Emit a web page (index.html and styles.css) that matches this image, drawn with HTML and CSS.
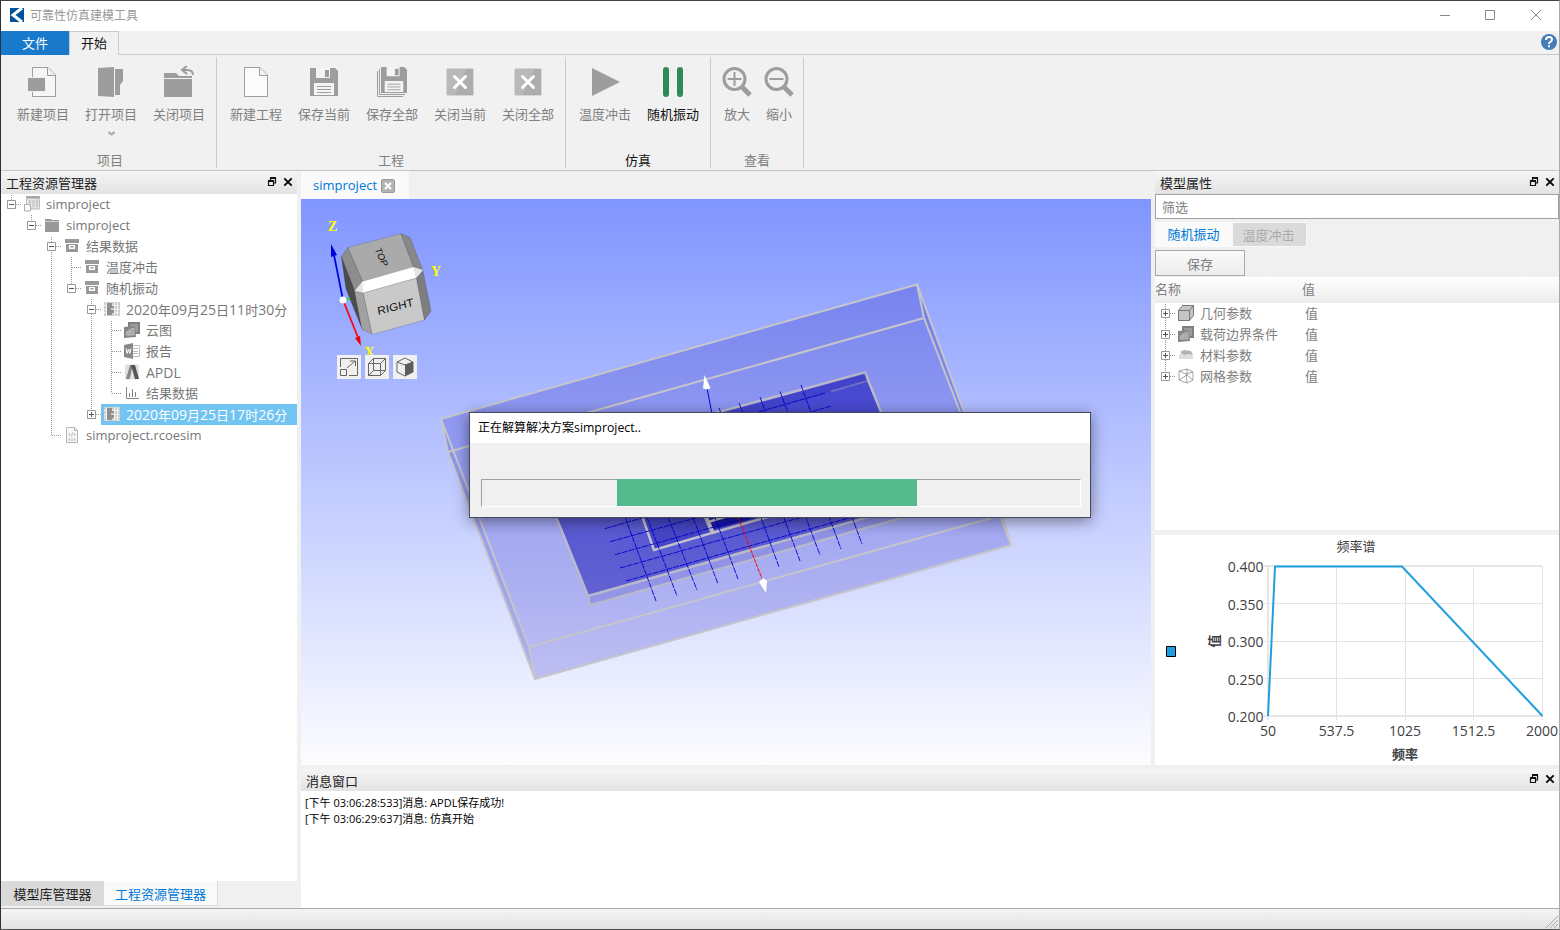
FILE: index.html
```html
<!DOCTYPE html>
<html lang="zh-CN">
<head>
<meta charset="utf-8">
<title>可靠性仿真建模工具</title>
<link rel="stylesheet" href="styles.css">
</head>
<body>
<svg class="defs" width="0" height="0">
  <defs>
    <symbol id="box" viewBox="0 0 16 16"><path fill="#999" d="M1 1h14v4H1zM2 6h12v8H2z"/><path fill="#fff" d="M5 7h6v4H5z"/><path fill="#999" d="M6.500 8h3v1.500h-3z"/></symbol>
    <symbol id="sheet" viewBox="0 0 16 16"><path fill="#cfcfcf" d="M0 1h16v14H0z"/><path fill="#8f8f8f" d="M3 2h5v3h2v2H7v2h3v3H8v2H3z"/><path stroke="#f2f2f2" fill="none" d="M2.500 1v14M10.500 1v14M0 4.500h2M0 8.500h2M0 11.500h2M8 4.500h7M10 8.500h5M10 11.500h5M13.500 1v14"/></symbol>
    <symbol id="cloud" viewBox="0 0 16 16"><path fill="#808080" d="M4 0h12v12H4z"/><path fill="#9c9c9c" d="M6 2h8v8H6z"/><path fill="#858585" d="M0 5l11-1 1 11-12 1z"/><path stroke="#b9b9b9" fill="#a5a5a5" d="M2 13q0-4 4-4 0-3 4-3v7zM5 7v7M2 10h8"/></symbol>
    <symbol id="float" viewBox="0 0 10 10"><path d="M3 1h6M3.500 1v2M8.500 1v5H6M1 4h5.500v4.500h-5V4" fill="none" stroke="#111" stroke-width="1.200"/><path d="M3 0h6v2H3zM1 3h6v2H1z" fill="#111"/></symbol>
    <symbol id="close" viewBox="0 0 10 10"><path d="M1.300 1.300l7.400 7.400M8.700 1.300L1.300 8.700" stroke="#000" stroke-width="1.800"/></symbol>
    <symbol id="floppy" viewBox="0 0 28 28"><path fill="#9d9d9d" d="M0 0h25l3 3v25H0z"/><path fill="#f4f4f4" d="M6 0h14v10H6zM4 15h20v12H4z"/><path fill="#9d9d9d" d="M15 2h4v7h-4z"/><path stroke="#9d9d9d" d="M7 18.500h14M7 21.500h14M7 24.500h14"/></symbol>
    <symbol id="xbox" viewBox="0 0 28 28"><rect x=".5" y=".5" width="27" height="27" rx="1.500" fill="#b9b9b9" stroke="#d6d6d6"/><path fill="#adadad" d="M20 1h7v26H9z"/><path d="M8.500 8.500l11 11M19.500 8.500l-11 11" stroke="#fff" stroke-width="3" stroke-linecap="round"/></symbol>
  </defs>
</svg>
<div class="window">
  <header class="titlebar">
    <svg class="logo" viewBox="0 0 14 14"><path fill="#00529b" d="M0 0h14v14H0z"/><path d="M12 0L3 7l9 7" fill="none" stroke="#fff" stroke-width="3"/></svg>
    <span class="app-name">可靠性仿真建模工具</span>
    <svg class="win-buttons" viewBox="0 0 106 14"><path d="M0 7.500h10M45.500 2.500h9v9h-9zM91 2l10 10M101 2L91 12" fill="none" stroke="#8a8a8a"/></svg>
  </header>
  <nav class="menu-tabs">
    <span class="file-tab">文件</span><span class="start-tab">开始</span>
    <svg class="help" viewBox="0 0 16 16"><circle cx="8" cy="8" r="8" fill="#427db8"/><path d="M5 6q0-3 3-3t3 2.600q0 1.400-1.600 2.200Q8 8.500 8 10" fill="none" stroke="#fff" stroke-width="2"/><path fill="#fff" d="M7 11.200h2v2H7z"/></svg>
  </nav>
  <section class="ribbon">
    <div class="group">
      <div class="tools">
        <div class="tool"><svg viewBox="0 0 32 32"><path d="M5.500 11V1.500H21L28.500 9v21.500h-23V26" fill="#f6f6f6" stroke="#9d9d9d"/><path d="M20.500 1.500V9.500h8" fill="#f1f1f1" stroke="#9d9d9d"/><path fill="#f1f1f1" d="M0 11h19v15H0z"/><path fill="#9d9d9d" d="M1 12h17v13H1z"/></svg>新建项目</div>
        <div class="tool"><svg viewBox="0 0 32 32"><path fill="#9d9d9d" d="M3 2l16-1v30L3 30zM20 3h8v12l-3 4v10h-5z"/></svg>打开项目<svg class="drop" viewBox="0 0 7 5"><path d="M.5 1l3 2.500 3-2.500" fill="none" stroke="#a8a8a8" stroke-width="2"/></svg></div>
        <div class="tool"><svg viewBox="0 0 32 32"><path fill="#9d9d9d" d="M1 7h12l3 3h13v2H1zM1 13h28v18H1z"/><path d="M20 4h4q6 0 6 5" fill="none" stroke="#9d9d9d" stroke-width="2"/><path d="M24 0l-5 4 5 4" fill="none" stroke="#9d9d9d" stroke-width="2"/></svg>关闭项目</div>
      </div>
      <div class="caption">项目</div>
    </div>
    <div class="group">
      <div class="tools">
        <div class="tool"><svg viewBox="0 0 32 32"><path d="M4.500 1.500H20L27.500 9v21.500h-23z" fill="#fbfbfb" stroke="#9d9d9d"/><path d="M19.500 1.500V9.500h8" fill="#f1f1f1" stroke="#9d9d9d"/></svg>新建工程</div>
        <div class="tool"><svg viewBox="0 0 32 32"><use href="#floppy" x="2" y="2" width="28" height="28"/></svg>保存当前</div>
        <div class="tool"><svg viewBox="0 0 32 32"><use href="#floppy" x="5" y="1" width="26" height="26"/><path d="M3.500 3v25.500H29M1.500 5v25.500H27" fill="none" stroke="#9d9d9d"/></svg>保存全部</div>
        <div class="tool"><svg viewBox="0 0 32 32"><use href="#xbox" x="2" y="2" width="28" height="28"/></svg>关闭当前</div>
        <div class="tool"><svg viewBox="0 0 32 32"><use href="#xbox" x="2" y="2" width="28" height="28"/></svg>关闭全部</div>
      </div>
      <div class="caption">工程</div>
    </div>
    <div class="group">
      <div class="tools">
        <div class="tool"><svg viewBox="0 0 32 32"><path fill="#9d9d9d" d="M3 2l28 14L3 30z"/></svg>温度冲击</div>
        <div class="tool active"><svg viewBox="0 0 32 32"><path d="M9 4v24M23 4v24" stroke="#2e8b57" stroke-width="6" stroke-linecap="round"/></svg>随机振动</div>
      </div>
      <div class="caption active">仿真</div>
    </div>
    <div class="group">
      <div class="tools narrow">
        <div class="tool"><svg viewBox="0 0 32 32"><circle cx="13.500" cy="13" r="10.500" fill="none" stroke="#9d9d9d" stroke-width="3"/><path d="M6.500 13h14M13.500 6v14" stroke="#9d9d9d" stroke-width="2"/><path d="M21 21l8 8" stroke="#9d9d9d" stroke-width="5"/></svg>放大</div>
        <div class="tool"><svg viewBox="0 0 32 32"><circle cx="13.500" cy="13" r="10.500" fill="none" stroke="#9d9d9d" stroke-width="3"/><path d="M6.500 13h14" stroke="#9d9d9d" stroke-width="2"/><path d="M21 21l8 8" stroke="#9d9d9d" stroke-width="5"/></svg>缩小</div>
      </div>
      <div class="caption">查看</div>
    </div>
  </section>

  <main class="workspace">
    <aside class="explorer">
      <div class="dock-title">工程资源管理器<svg><use href="#float"/></svg><svg><use href="#close"/></svg></div>
      <div class="tree">
        <svg class="guides" viewBox="1 194 296 260">
          <path class="dots" d="M11.500 195v6M16 204.500h6M31.500 215v6M36 225.500h6M51.500 237v5M56 246.500h6M51.500 252v183.500h10M71.500 257v27M72 267.500h9M76 288.500h6M91.500 299v6M96 309.500h5M91.500 314v96M111.500 321v72.500M112 330.500h10M112 351.500h10M112 372.500h10M112 393.500h10M96 414.500h5"/>
          <path class="expander" d="M7.500 200.500h8v8h-8zM27.500 221.500h8v8h-8zM47.500 242.500h8v8h-8zM67.500 284.500h8v8h-8zM87.500 305.500h8v8h-8zM87.500 410.500h8v8h-8z"/>
          <path class="sign" d="M9 204.500h5M29 225.500h5M49 246.500h5M69 288.500h5M89 309.500h5M89 414.500h5M91.500 412v5"/>
        </svg>
        <ul class="rows">
          <li class="l0"><svg viewBox="0 0 16 16"><path fill="#a9a9a9" d="M2 0h14v2H2z"/><path fill="#e4e4e4" stroke="#bdbdbd" d="M2.500 2.500h13v10.500h-13z"/><path stroke="#c8c8c8" stroke-width="2" d="M6 4v7M9.500 4v7M13 4v7"/><path fill="#fff" stroke="#aaa" d="M.5 8.500h4l2 2v4.500h-6z"/></svg><span>simproject</span></li>
          <li class="l1"><svg viewBox="0 0 16 16"><path fill="#999" d="M1 2h6l1 1h7v12H1z"/><path stroke="#ccc" d="M1 4.500h14"/></svg><span>simproject</span></li>
          <li class="l2"><svg><use href="#box"/></svg><span>结果数据</span></li>
          <li class="l3"><svg><use href="#box"/></svg><span>温度冲击</span></li>
          <li class="l3"><svg><use href="#box"/></svg><span>随机振动</span></li>
          <li class="l4"><svg><use href="#sheet"/></svg><span><i>2020</i>年<i>09</i>月<i>25</i>日<i>11</i>时<i>30</i>分</span></li>
          <li class="l5"><svg><use href="#cloud"/></svg><span>云图</span></li>
          <li class="l5"><svg viewBox="0 0 16 16"><path fill="#fff" stroke="#bbb" d="M8 2.500h7.500v11H8z"/><path stroke="#bbb" d="M9 5.500h5M9 8.500h5M9 10.500h5"/><path fill="#888" d="M0 2l9-2v16l-9-2z"/><path d="M2 5.500l1.200 5L4.500 6l1.300 4.500L7 5.500" fill="none" stroke="#fff"/></svg><span>报告</span></li>
          <li class="l5"><svg viewBox="0 0 16 16"><rect width="14" height="15" y=".5" x="1" rx="2" fill="#e0e0e0"/><path fill="#858585" d="M6 1h3L5.500 15H2z"/><path fill="#555" d="M7 1h4l4 14h-4z"/></svg><span><i>APDL</i></span></li>
          <li class="l5"><svg viewBox="0 0 16 16"><path d="M2.500 2v11.500H15M5.500 8v4M8.500 4v8M11.500 7v5" fill="none" stroke="#858585"/></svg><span>结果数据</span></li>
          <li class="l4 selected"><svg><use href="#sheet"/></svg><span><i>2020</i>年<i>09</i>月<i>25</i>日<i>17</i>时<i>26</i>分</span></li>
          <li class="l2"><svg viewBox="0 0 16 16"><path d="M2.500.5h8l3 3v12h-11zM10.500.5v3h3" fill="#f8f8f8" stroke="#b5b5b5"/><path d="M6 6L4.500 7.500 6 9M10 6l1.500 1.500L10 9M8.500 5.500l-1 4" fill="none" stroke="#999" stroke-width=".8"/><path fill="#ddd" d="M4 11h8v3H4z"/></svg><span>simproject.rcoesim</span></li>
        </ul>
      </div>
      <div class="bottom-tabs"><span class="tab-off">模型库管理器</span><span class="tab-on">工程资源管理器</span></div>
    </aside>

    <div class="right-side">
      <div class="upper">
        <section class="document">
          <div class="doc-tabs"><div class="doc-tab"><span>simproject</span><svg viewBox="0 0 14 14"><rect x=".5" y=".5" width="13" height="13" rx="1.500" fill="#b4b4b4" stroke="#999"/><path d="M4 4l6 6M10 4l-6 6" stroke="#fff" stroke-width="2"/></svg></div></div>
          <svg class="viewport" viewBox="301 199 850 566">
            <defs>
              <linearGradient id="sky" x2="0" y2="1"><stop stop-color="#8095ff"/><stop offset="1" stop-color="#fdfdff"/></linearGradient>
              <linearGradient id="slab" gradientUnits="userSpaceOnUse" x1="0" y1="284" x2="0" y2="680"><stop stop-color="#7784ef"/><stop offset="1" stop-color="#bdbef2"/></linearGradient>
              <linearGradient id="board" gradientUnits="userSpaceOnUse" x1="0" y1="371" x2="0" y2="600"><stop stop-color="#4546d0"/><stop offset="1" stop-color="#6262d2"/></linearGradient>
            </defs>
            <path fill="url(#sky)" d="M301 199h850v566H301z"/>
            <path fill="url(#slab)" d="M441 419L917 284.500 1002 515l9 30-476 134-87-227z"/>
            <path fill="#5555cc" opacity=".12" d="M441 419l7 33 87 227-6-32zM917 284.500l7 33.500 87 227-9-30z"/>
            <path fill="#8585df" opacity=".65" d="M588 596l2 9 315-88h-35z"/>
            <path fill="url(#board)" stroke="#b9b9cc" stroke-width="2.500" d="M865 372.500L534 462l54 134 330-93z"/>
            <path fill="#3838be" opacity=".3" d="M865 373l2 9-112 32h-34z"/>
            <path stroke="#6c6cc4" stroke-width="2" d="M867 381l-36 10.500"/>
            <path fill="#4646c4" stroke="#c2c2ce" stroke-width="2.500" d="M641 513l13 37 58-17-9-22z"/>
            <path fill="#1818a8" d="M708 517l4 13 55-15h-50z"/>
            <path fill="none" stroke="#c2c2ce" stroke-width="2.500" d="M708 522l20-6M712 533l59-17"/>
            <path stroke="#c2c2ce" stroke-width="4" d="M705 515l8 18"/>
            <path fill="none" stroke="#b9b9cc" stroke-width="2.300" d="M588 596l2 9 315-88"/>
            <path class="mesh" d="M625 517l31 84M647 517l30 79M668 517l29 73M691 512l27 72M714 515l24 64M760 515l19 52M781 510l19 51M800 502l20 53M821 495l20 54M842 490l20 54M605 528.700l45-13M610 541.700l94-26M615 554.700l150-42M620 568l190-53M626 581l230-65M719 408l3 8M739 403l5 13M760 397l7 19M780 391.500l9 24M801 385l11 30M825 393l-70 20M831 406l-30 9"/>
            <path class="edges" d="M529 647L441 419 917 284.500 1002 515zM448 452l476-134M441 419l7 33 87 227 476-134-87-227-7-33.500M529 647l6 32M1002 515l9 30"/>
            <path d="M738 517l26 67" stroke="#ff0000" stroke-dasharray="4 1"/>
            <path d="M707 388l5 26" stroke="#0000d8"/>
            <path fill="#fff" d="M704.500 375l6 13-3 1.500-4.500-1zM759 582l4-4 4 3-1 12z"/>
            <g stroke="#2d2d2d" stroke-width=".2">
              <path fill="#8d8d8d" d="M348 247.500l14.700 34-8 10-13.400-35z"/>
              <path fill="#4c4c4c" d="M341.300 256.500l13.400 34.500 7.300 38-16-40z"/>
              <path fill="#aaa" d="M348 247.500l53-14 12.700 34-51 14z"/>
              <path fill="#888" d="M401 233.500l9 4 13 33-9.300-3.500z"/>
              <path fill="#fff" stroke="none" d="M362.500 281.500l51-14.500 3 11-53.500 15-8.500-1.500z"/>
              <path fill="#e4e4e4" stroke="none" d="M413.500 267l9.500 3-6.500 8zM362.500 281.500l.5 11.500-8.500-2z"/>
              <path fill="#c9c9c9" d="M363 293l53.500-15 8 42-52.500 14.500z"/>
              <path fill="#a1a1a1" d="M354.500 291l8.500 2 9 41-10-4.500z"/>
              <path fill="#7e7e7e" d="M423 271l8 40-6.500 9-8-42z"/>
            </g>
            <text class="cube-label top" transform="matrix(.4 .92 -.96 .27 374.500 249)">TOP</text>
            <text class="cube-label wide" transform="matrix(.97 -.25 .15 .9 378 315)">RIGHT</text>
            <path d="M343 300l-9-45" stroke="#0000e0" stroke-width="1.700"/><path d="M343 300l16 40" stroke="#f00" stroke-width="1.700"/><path d="M344 299h6" stroke="#0e0" stroke-width="1.500"/>
            <path fill="#00d" d="M331 244l6 11-6 2z"/><path fill="#e00" d="M355 338l5-2 1 10z"/><circle cx="343" cy="300" r="3.500" fill="#fff"/>
            <text class="axis" x="328" y="231">Z</text><text class="axis" x="431" y="275.500">Y</text><text class="axis" x="364.500" y="357">X</text>
            <path fill="#f0f0f0" d="M337 355h24v24h-24zM365 355h24v24h-24zM393 355h24v24h-24z"/>
            <g fill="none" stroke="#666"><path d="M340.500 367v-8.500h17v17H349M340.500 369.500h6v6h-6zM347 368l8-7M350 361h5.500v5"/><path d="M368.500 363.500h12v12h-12zM373.500 358.500h12v12h-12zM368.500 363.500l5-5M380.500 363.500l5-5M380.500 375.500l5-5M368.500 375.500l5-5"/><path d="M397 362l8-4 8 4v10l-8 4-8-4zM397 362l8 3 8-3"/></g>
            <path fill="#5c5c5c" d="M405 365l8-3v10l-8 4z"/>
          </svg>
        </section>

        <aside class="props">
          <div class="dock-title">模型属性<svg><use href="#float"/></svg><svg><use href="#close"/></svg></div>
          <div class="filter">筛选</div>
          <div class="prop-tabs"><span class="on">随机振动</span><span class="off">温度冲击</span></div>
          <div class="save">保存</div>
          <div class="columns"><span>名称</span><span>值</span></div>
          <div class="prop-tree">
            <svg class="guides" viewBox="1155 303 404 227">
              <path class="dots" d="M1165.500 304v72M1170 313.500h6M1170 334.500h6M1170 355.500h6M1170 376.500h6"/>
              <path class="expander" d="M1161.500 309.500h8v8h-8zM1161.500 330.500h8v8h-8zM1161.500 351.500h8v8h-8zM1161.500 372.500h8v8h-8z"/>
              <path class="sign" d="M1163 313.500h5M1165.500 311v5M1163 334.500h5M1165.500 332v5M1163 355.500h5M1165.500 353v5M1163 376.500h5M1165.500 374v5"/>
            </svg>
            <ul class="rows">
              <li><svg viewBox="0 0 16 16"><path d="M.5 5.500l4-5h11v10l-4 5H.5z" fill="#c5c5c5" stroke="#777"/><path d="M.5 5.500h11v10M11.500 5.500l4-5" fill="none" stroke="#777"/></svg><span>几何参数</span><b>值</b></li>
              <li><svg><use href="#cloud"/></svg><span>载荷边界条件</span><b>值</b></li>
              <li><svg viewBox="0 0 16 16"><path fill="#dedede" d="M1 8q1-2 4-2h7q3 1 3 6H1z"/><path fill="#b2b2b2" d="M2 5l4-2 7 1 2 4-4-1-5 1z"/></svg><span>材料参数</span><b>值</b></li>
              <li><svg viewBox="0 0 16 16"><path d="M1 3l8-2 6 3v8l-6 3-8-3zM1 3l7 3 7-2M8 6l1 9M9 1v6l-8 5M9 7l6 5" fill="none" stroke="#999" stroke-width=".9"/></svg><span>网格参数</span><b>值</b></li>
            </ul>
          </div>
          <svg class="chart" viewBox="1155 535 404 230">
            <text x="1356" y="551" class="mid cjk">频率谱</text>
            <path stroke="#e3e3e3" fill="none" d="M1264 603.500h278M1264 641.500h278M1264 678.500h278M1336.500 566v154M1405.500 566v154M1473.500 566v154M1542.500 566v154"/>
            <path stroke="#e6e6e6" stroke-width="2" fill="none" d="M1264 566h278M1264 716h278M1268 566v154"/>
            <path stroke="#209fdf" stroke-width="2" fill="none" d="M1268 716l7-149.500h127l140.500 149.500"/>
            <g class="end"><text x="1263.500" y="572">0.400</text><text x="1263.500" y="610">0.350</text><text x="1263.500" y="647">0.300</text><text x="1263.500" y="685">0.250</text><text x="1263.500" y="722">0.200</text></g>
            <g class="mid"><text x="1268" y="736">50</text><text x="1336.500" y="736">537.5</text><text x="1405" y="736">1025</text><text x="1473.500" y="736">1512.5</text><text x="1542" y="736">2000</text><text class="cjk bold" x="1405" y="758.500">频率</text><text class="cjk bold" transform="translate(1219 641) rotate(-90)">值</text></g>
            <path fill="#209fdf" stroke="#000" d="M1166.500 646.500h9v10h-9z"/>
          </svg>
        </aside>
      </div>
      <section class="messages">
        <div class="dock-title">消息窗口<svg><use href="#float"/></svg><svg><use href="#close"/></svg></div>
        <div class="log"><p>[下午 03:06:28:533]消息: APDL保存成功!</p><p>[下午 03:06:29:637]消息: 仿真开始</p></div>
      </section>
    </div>
  </main>
  <footer class="status"><svg viewBox="0 0 14 14"><path d="M1 13L13 1M5 13l8-8M9 13l4-4" stroke="#aaa"/></svg></footer>
  <div class="dialog">
    <div class="dialog-title">正在解算解决方案<i>simproject..</i></div>
    <div class="dialog-body"><div class="progress"><div class="chunk"></div></div></div>
  </div>
</div>
</body>
</html>
```
FILE: styles.css
```css
* { box-sizing: border-box; }
body { margin: 0; font: 13px/21px "Open Sans", "Noto Sans CJK SC", sans-serif; color: #222; background: #f0f0f0; overflow: hidden; }
i { font-style: normal; }
ul { list-style: none; margin: 0; padding: 0; }
p { margin: 0; }
svg { display: block; flex: none; }
.defs { position: absolute; }
.window { position: relative; width: 1560px; height: 930px; display: flex; flex-direction: column; border: 1px solid #777; border-left-color: #2c3038; border-top-color: #444; border-right-color: #aaa; border-bottom-color: #555; background: #f0f0f0; }

.titlebar { height: 30px; flex: none; display: flex; align-items: center; padding: 0 0 2px 9px; background: #fff; }
.logo { width: 14px; height: 14px; }
.app-name { margin-left: 6px; font-size: 12px; color: #999; }
.win-buttons { width: 106px; height: 14px; margin-left: auto; margin-right: 13px; }

.menu-tabs { height: 24px; flex: none; display: flex; background: #f1f1f1; border-bottom: 1px solid #cacaca; }
.menu-tabs span { height: 24px; line-height: 25px; text-align: center; }
.menu-tabs .start-tab { width: 50px; line-height: 23px; background: #f1f1f1; border: 1px solid #cacaca; border-bottom: 0; color: #111; }
.file-tab { width: 68px; color: #fff; background: #1979ca; }
.help { width: 16px; height: 16px; margin: 3px 2px 0 auto; }

.ribbon { height: 116px; flex: none; display: flex; padding: 2px 0 3px 3px; background: #f1f1f1; border-bottom: 1px solid #c6c6c6; color: #808080; }
.group { height: 111px; display: flex; flex-direction: column; justify-content: space-between; padding: 0 3px 0 5px; border-right: 1px solid #cacaca; }
.tools { display: flex; }
.tool { width: 68px; display: flex; flex-direction: column; align-items: center; padding-top: 9px; line-height: 20px; }
.tool > svg:first-child { width: 32px; height: 32px; margin-bottom: 6px; }
.tool .drop { width: 7px; height: 5px; margin-top: 7px; }
.narrow .tool { width: 42px; }
.caption { text-align: center; line-height: 16px; padding-right: 2px; }
.active { color: #111; }

.workspace { height: 738px; flex: none; display: flex; gap: 4px; border-bottom: 1px solid #a9a9a9; }
.explorer { width: 296px; display: flex; flex-direction: column; }
.dock-title { height: 23px; flex: none; display: flex; align-items: center; padding: 2px 4px 0 5px; background: linear-gradient(#f5f5f5, #e3e3e3); color: #222; }
.dock-title svg { width: 10px; height: 10px; margin: -4px 0 0 6px; }
.dock-title svg:first-of-type { margin-left: auto; }
.tree { flex: 1; display: grid; align-content: start; background: #fff; color: #777; }
.guides, .rows { grid-area: 1 / 1; }
.tree .guides { width: 296px; height: 260px; }
.dots { fill: none; stroke: #999; stroke-dasharray: 1 1; }
.expander { fill: #fff; stroke: #999; }
.sign { stroke: #555; }
.rows li { height: 21px; display: flex; align-items: center; }
.rows svg { width: 16px; height: 16px; margin: -1px 6px 0 0; }
.rows .l0 { padding-left: 23px; }
.rows .l1 { padding-left: 43px; }
.rows .l2 { padding-left: 63px; }
.rows .l3 { padding-left: 83px; }
.rows .l4 { padding-left: 103px; }
.rows .l5 { padding-left: 123px; }
.rows .selected { margin-left: 100px; padding-left: 3px; background: #72c4f2; color: #fff; }
.tree i { font-size: 14px; }
.bottom-tabs { height: 27px; flex: none; display: flex; background: #f0f0f0; }
.bottom-tabs span { text-align: center; line-height: 27px; height: 25px; }
.tab-off { width: 103px; background: #dadada; }
.tab-on { width: 114px; color: #0078d7; background: #fafafa; border: solid #ddd; border-width: 0 1px 1px 0; }

.right-side { width: 1258px; display: flex; flex-direction: column; }
.upper { height: 594px; display: flex; gap: 4px; }
.document { width: 850px; display: flex; flex-direction: column; }
.doc-tabs { height: 28px; display: flex; }
.doc-tab { width: 108px; display: flex; align-items: center; gap: 4px; padding: 1px 0 0 12px; background: #fafafa; color: #0078d7; }
.doc-tab svg { width: 14px; height: 14px; }
.viewport { width: 850px; height: 566px; }
.edges { fill: none; stroke: #c5c5ca; stroke-width: 2; }
.mesh { fill: none; stroke: #0000d0; stroke-width: .9; stroke-dasharray: 6 1; }
.cube-label { font: 13px "Liberation Sans", sans-serif; fill: #111; }
.cube-label.top { font-size: 9.5px; }
.cube-label.wide { font-size: 12px; }
.axis { font: bold 14px "Liberation Serif", serif; fill: #ff0; }

.props { width: 404px; display: flex; flex-direction: column; color: #808080; }
.filter { height: 25px; flex: none; border: 1px solid #a0a0a0; background: #fff; padding-left: 6px; line-height: 24px; }
.prop-tabs { height: 25px; display: flex; margin-top: 3px; line-height: 25px; text-align: center; }
.prop-tabs .on { width: 77px; background: #fafafa; color: #0078d7; }
.prop-tabs .off { width: 75px; background: #dadada; color: #aaa; border: 1px solid #f8f8f8; padding-right: 2px; }
.save { width: 90px; height: 26px; margin: 3px 0 1px; border: 1px solid #aaa; background: linear-gradient(#fafafa, #ececec); text-align: center; line-height: 26px; }
.columns { height: 26px; display: flex; background: linear-gradient(#fff, #ececec); line-height: 25px; }
.columns span:first-child { width: 147px; }
.prop-tree { height: 227px; display: grid; align-content: start; background: #fff; }
.prop-tree .guides { width: 404px; height: 227px; }
.prop-tree li { padding-left: 23px; }
.prop-tree span { width: 105px; }
.prop-tree b { font-weight: normal; }
.chart { width: 404px; height: 230px; margin-top: 5px; background: #fff; font-size: 14px; fill: #404044; }
.chart .cjk { font-size: 13px; }
.chart .bold { font-weight: bold; }
.mid { text-anchor: middle; }
.end { text-anchor: end; }

.messages { margin-top: 4px; flex: 1; display: flex; flex-direction: column; background: #fff; }
.messages .dock-title { height: 22px; }
.log { padding: 4px 4px; font-size: 11px; line-height: 16px; color: #000; }
.status { flex: 1; display: flex; justify-content: flex-end; align-items: flex-end; background: linear-gradient(#f4f4f4, #e2e2e2); }
.status svg { width: 14px; height: 14px; }

.dialog { position: absolute; left: 468px; top: 411px; width: 622px; height: 106px; border: 1px solid #474a5e; background: #f0f0f0; box-shadow: 0 3px 14px rgba(0, 0, 0, .45); }
.dialog-title { height: 30px; background: #fff; padding-left: 8px; font-size: 12px; line-height: 30px; color: #000; }
.dialog-title i { font-size: 12.3px; }
.dialog-body { padding: 36px 9px 0 11px; }
.progress { height: 28px; border: 1px solid #a0a0a0; border-right-color: #fff; border-bottom-color: #fff; }
.chunk { width: 300px; height: 27px; margin: -1px 0 0 135px; background: #56bb8c; }
```
